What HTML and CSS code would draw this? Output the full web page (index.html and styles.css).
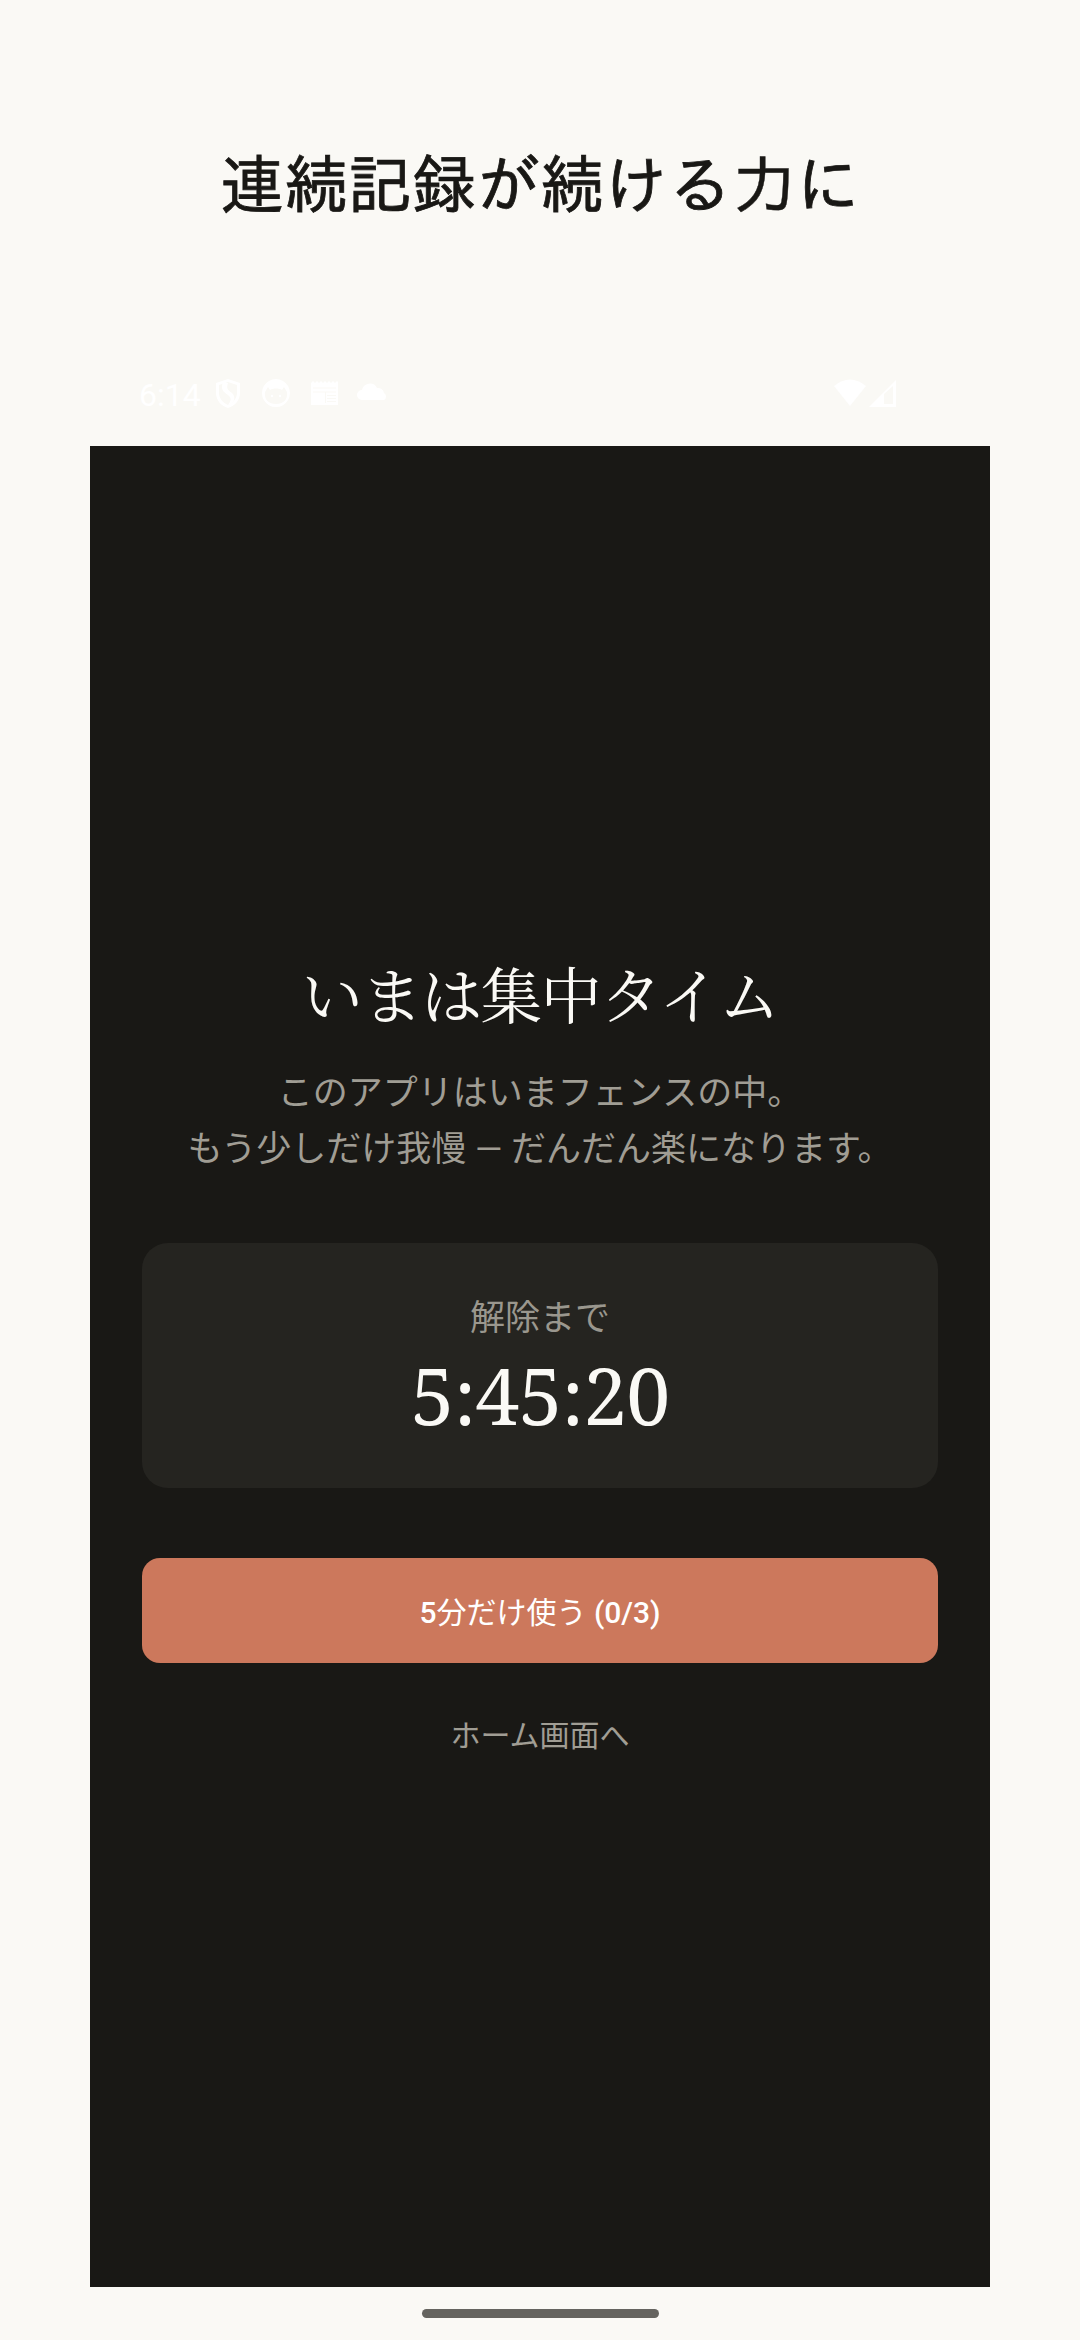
FILE: index.html
```html
<!DOCTYPE html>
<html lang="ja">
<head>
<meta charset="utf-8">
<title>集中タイム</title>
<link rel="stylesheet" href="styles.css">
</head>
<body>
<main class="poster">
  <h1 class="headline">連続記録が続ける<span class="thin">力</span>に</h1>
  <div class="status">
    <span class="clock">6:14</span>
    <svg class="notices" viewBox="0 0 180 32" width="180" height="32" fill="#fff">
      <path fill-rule="evenodd" d="M14 1 L26 5 V15 C26 22 21 28 14 30 C7 28 2 22 2 15 V5 Z M14 4 L5 7 V15 C5 20 9 25 14 27 C19 25 23 20 23 15 V7 Z"/>
      <path d="M9 4 C6 12 10 14 14 17 C18 20 17 23 14 27 C21 25 22 19 18 15 C14 12 12 11 14 5 Z"/>
      <path fill-rule="evenodd" d="M62 1 a14 14 0 1 1 -.1 0 Z M54 9 L51 14 C50 21 54 26 62 26 C70 26 74 21 73 14 L70 9 L68 12 C65 10 59 10 56 12 Z"/>
      <circle cx="58" cy="18" r="1.2"/><circle cx="66" cy="18" r="1.2"/>
      <path fill-rule="evenodd" d="M97 5 l2-2 2 2 2-2 2 2 2-2 2 2 2-2 2 2 2-2 2 2 2-2 2 2 2-2 1 1 V27 H97 Z M99 9.500 V10.500 H122 V9.500 Z M99 13.500 V14.500 H111 V25 H112 V14.500 H122 V13.500 Z M113 17 V18 H122 V17 Z M113 20 V21 H122 V20 Z M113 23 V24 H122 V23 Z"/>
      <path d="M148 22 a5 5 0 0 1 0-10 a8 8 0 0 1 15-2 a6 6 0 0 1 7 5 a4 4 0 0 1 0 7 Z"/>
    </svg>
    <svg class="signals" viewBox="0 0 64 32" width="64" height="32" fill="#fff">
      <path d="M0 8 Q16 -5 32 8 L16 28 Z"/>
      <path fill-rule="evenodd" d="M35 29 L62 2 V29 Z M50 16 V26 H59 V8 Z"/>
    </svg>
  </div>
  <section class="screen">
    <h2 class="title">いまは集中タイム</h2>
    <p class="message">このアプリはいまフェンスの中。<br>もう少しだけ我慢 — だんだん楽になります。</p>
    <div class="card">
      <div class="label">解除まで</div>
      <div class="timer">5:45:20</div>
    </div>
    <button class="primary"><b>5</b>分だけ使う <b>(0/3)</b></button>
    <a class="home">ホーム画面へ</a>
  </section>
  <div class="handle"></div>
</main>
</body>
</html>
```
FILE: styles.css
```css
* { box-sizing: border-box; }
body { margin: 0; background: #faf9f5; font-family: Roboto, "Noto Sans CJK JP", sans-serif; }
.poster { width: 1080px; height: 2340px; display: flex; flex-direction: column; align-items: center; overflow: hidden; }
.headline { margin: 134px 0 0; height: 101px; font: 400 64px/100px IPAGothic, "Noto Sans CJK JP", sans-serif; color: #191815; -webkit-text-stroke: 0.800px #191815; white-space: nowrap; }
.thin { -webkit-text-stroke-width: 0.400px; }
.status { width: 900px; height: 211px; padding: 143px 92px 0 49px; display: flex; align-items: flex-start; color: #fff; }
.clock { width: 75px; font-size: 32px; line-height: 34px; }
.signals { margin-left: auto; }
.screen { width: 900px; height: 1841px; padding: 497px 52px 0; display: flex; flex-direction: column; align-items: center; background: #191815; }
.title { margin: 0; height: 100px; font: 400 61.300px/100px "Noto Serif CJK JP", "Noto Serif JP", serif; letter-spacing: -1.500px; color: #faf9f5; white-space: nowrap; }
.message { margin: 23px 0 0; height: 111px; font-size: 35px; line-height: 55.500px; color: #a09d94; text-align: center; white-space: nowrap; }
.card { width: 796px; height: 245px; margin-top: 66px; padding-top: 50px; border-radius: 26px; background: #252420; text-align: center; }
.label { font-size: 35px; line-height: 52px; color: #9a978e; }
.timer { font: 400 78.800px/100px "Noto Serif", "DejaVu Serif", serif; letter-spacing: -0.900px; color: #faf9f5; }
.primary { width: 796px; height: 105px; margin-top: 70px; padding: 5px 0 0; border: 0; border-radius: 18px; background: #cc785c; color: #fff; font: 400 30px/40px Roboto, "Noto Sans CJK JP", sans-serif; }
.primary b { font-weight: 500; }
.home { margin-top: 49px; font-size: 30px; line-height: 48px; color: #a09d94; }
.handle { width: 237px; height: 9px; margin-top: 22px; border-radius: 5px; background: #65645f; }
```
